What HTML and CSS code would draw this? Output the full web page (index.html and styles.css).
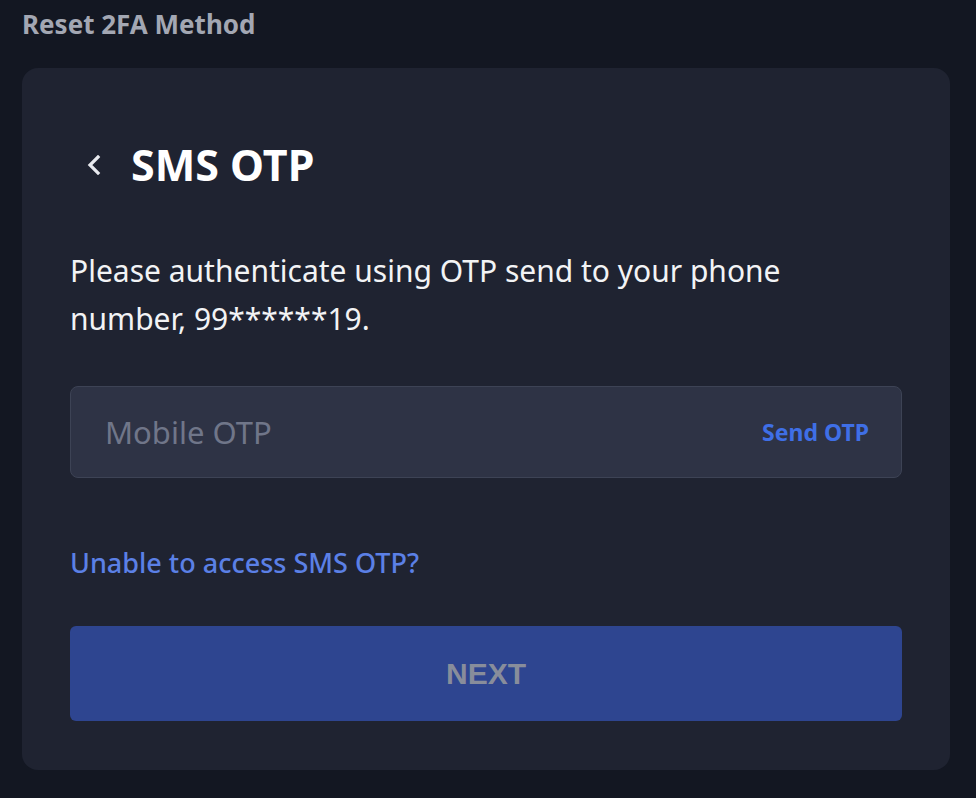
FILE: index.html
```html
<!DOCTYPE html>
<html lang="en">
<head>
    <meta charset="UTF-8">
    <meta name="viewport" content="width=device-width, initial-scale=1.0">
    <title>Reset 2FA Method</title>
    <link rel="stylesheet" href="styles.css">
</head>
<body>
    <h1 class="page-title">Reset 2FA Method</h1>

    <section class="card">
        <div class="card-head">
            <span class="back">
                <svg width="18" height="20" viewBox="0 0 18 20">
                    <path d="M14 2 L6 10 L14 18" fill="none" stroke="#e8eaef" stroke-width="3.2" stroke-linecap="square"/>
                </svg>
            </span>
            <h2>SMS OTP</h2>
        </div>

        <p class="intro">Please authenticate using OTP send to your phone number, 99******19.</p>

        <div class="otp-field">
            <span class="placeholder">Mobile OTP</span>
            <a class="send" href="#">Send OTP</a>
        </div>

        <a class="help" href="#">Unable to access SMS OTP?</a>

        <button class="next">NEXT</button>
    </section>
</body>
</html>
```

FILE: styles.css
```css
body {
    margin: 0;
    background-color: #131722;
    font-family: "Noto Sans", "Open Sans", sans-serif;
    color: #ffffff;
    height: 798px;
    overflow: hidden;
}
.page-title {
    margin: 0;
    padding: 7px 0 0 22px;
    height: 68px;
    box-sizing: border-box;
    font-size: 26px;
    line-height: 34px;
    font-weight: 700;
    color: #a3a7b3;
}
.card {
    margin: 0 26px 0 22px;
    padding: 0 48px 49px;
    background-color: #1f2331;
    border-radius: 16px;
}
.card-head {
    display: flex;
    align-items: center;
    padding-top: 73px;
    height: 48px;
}
.back {
    display: flex;
    margin-left: 14px;
    width: 47px;
}
.card-head h2 {
    margin: 0;
    font-size: 43px;
    line-height: 48px;
    font-weight: 700;
    color: #ffffff;
}
.intro {
    margin: 58px 0 0;
    max-width: 740px;
    font-size: 30px;
    line-height: 48px;
    color: #f2f3f5;
}
.otp-field {
    margin-top: 43px;
    height: 92px;
    box-sizing: border-box;
    display: flex;
    align-items: center;
    justify-content: space-between;
    padding: 0 32px 0 34px;
    background-color: #2e3345;
    border: 1px solid #3d4355;
    border-radius: 8px;
}
.placeholder {
    font-size: 31px;
    color: #707689;
}
.send {
    font-size: 23px;
    font-weight: 700;
    color: #3f6fe6;
    text-decoration: none;
}
.help {
    display: block;
    margin-top: 67px;
    font-size: 27px;
    line-height: 36px;
    font-weight: 500;
    color: #5b80e6;
    text-decoration: none;
}
.next {
    display: block;
    width: 100%;
    height: 95px;
    margin-top: 45px;
    border: none;
    border-radius: 6px;
    background-color: #2e4590;
    font-family: "Liberation Sans", Arial, sans-serif;
    font-size: 30px;
    font-weight: 700;
    color: #888d9b;
}
```
